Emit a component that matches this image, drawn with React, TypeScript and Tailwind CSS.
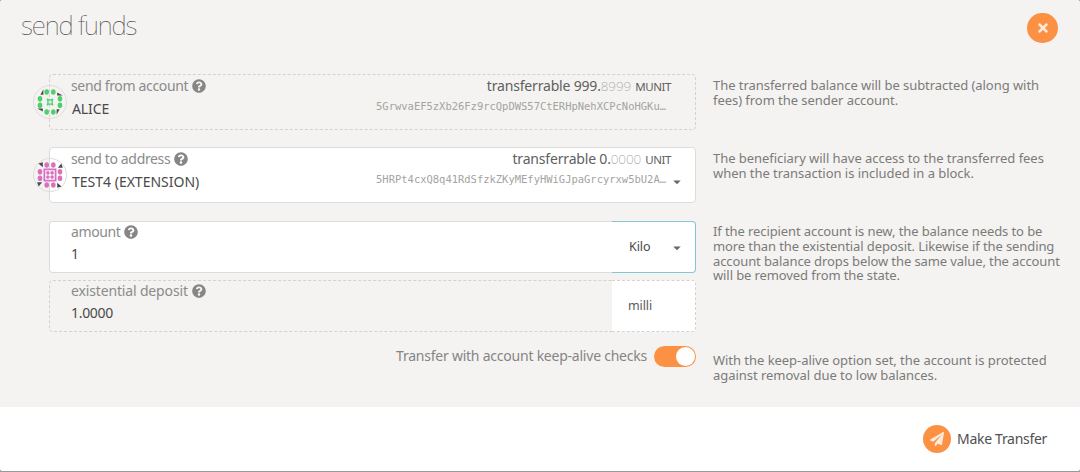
import type { ReactNode } from "react";
import { FaPaperPlane, FaQuestionCircle, FaTimes } from "react-icons/fa";

const DOTS: [number, number][] = [
  [13.7, 7], [20.3, 7], [7, 13.7], [7, 20.3], [27, 13.7], [27, 20.3], [13.7, 27], [20.3, 27],
];

function Identicon({ color, corner, children }: { color: string; corner: string; children: ReactNode }) {
  return (
    <svg className="absolute top-[10px] -left-[17px] size-[34px]" viewBox="0 0 34 34">
      <circle cx="17" cy="17" r="16.5" fill="none" stroke="#dcdcdc" />
      {[0, 90, 180, 270].map((angle) => (
        <polygon key={angle} points={corner} fill="#4a4a4a" transform={`rotate(${angle} 17 17)`} />
      ))}
      {DOTS.map(([x, y]) => (
        <ellipse key={`${x}-${y}`} cx={x} cy={y} rx="2.3" ry="2.8" fill={color} />
      ))}
      {children}
    </svg>
  );
}

function Label({ children }: { children: ReactNode }) {
  return (
    <div className="flex h-5 items-center gap-[4px] text-[14px] leading-5 text-[#8b8b8b]">
      <span>{children}</span>
      <FaQuestionCircle className="size-[14px] text-[#868686]" />
    </div>
  );
}

function Caret() {
  return (
    <svg className="h-[5px] w-[8px]" viewBox="0 0 8 5">
      <path d="M0.3 0.5h7.4L4 4.3z" fill="#666" />
    </svg>
  );
}

function Help({ lines, className }: { lines: string[]; className: string }) {
  return (
    <div className={`text-[13px] leading-[14.8px] whitespace-nowrap text-[#7b7b79] ${className}`}>
      {lines.map((line) => (
        <p key={line}>{line}</p>
      ))}
    </div>
  );
}

function Balance({ whole, fraction, unit }: { whole: string; fraction: string; unit: string }) {
  return (
    <div className="flex h-5 items-baseline leading-5 text-[#606060]">
      <span className="text-[14px] tracking-[-0.18px]">transferrable {whole}.</span>
      <span className="text-[13.5px] font-extralight tracking-[-0.1px] text-[#a3a3a3]">{fraction}</span>
      <span className="ml-[4px] text-[11.5px] tracking-[-0.4px]">{unit}</span>
    </div>
  );
}

function Address({ children }: { children: string }) {
  return (
    <div className="mr-[5px] font-['DejaVu_Sans_Mono',monospace] text-[10.47px] leading-5 text-[#a3a3a2]">{children}</div>
  );
}

export default function App() {
  return (
    <div className="flex h-[472px] w-[1080px] flex-col overflow-hidden bg-[#999] font-['Noto_Sans',sans-serif]">
      <div className="flex h-[471px] flex-col overflow-hidden rounded-[3px] bg-white">
        <main className="h-[407px] bg-[#f4f3f1]">
          <header className="flex h-[74px] items-start justify-between pr-[22px] pl-[21px]">
            <h1 className="pt-[7px] text-[26px] leading-[36px] font-thin tracking-[-1.15px] text-[#4a4a4a]">send funds</h1>
            <button className="mt-[13px] flex h-[30px] w-[31px] items-center justify-center rounded-full bg-[#fc9144] text-[#fdeadd]">
              <FaTimes className="size-[14px]" />
            </button>
          </header>

          <section className="flex h-[73px] pl-[49px]">
            <div className="relative flex h-[56px] w-[647px] justify-between rounded-[4px] border border-dashed border-[#d2d2d0] pr-[24px] pl-[21px]">
              <Identicon color="#4bd06c" corner="7.4,9.8 10.4,4.2 10.4,9.8">
                <rect x="14.9" y="14.9" width="4.2" height="4.2" fill="none" stroke="#4bd06c" strokeWidth="1.3" />
                {[[14.6, 14.6], [19.4, 14.6], [14.6, 19.4], [19.4, 19.4]].map(([x, y]) => (
                  <circle key={`${x}-${y}`} cx={x} cy={y} r="1" fill="#4bd06c" />
                ))}
              </Identicon>
              <div className="pt-px tracking-[-0.35px]">
                <Label>send from account</Label>
                <div className="mt-[3px] pl-[1px] text-[14px] leading-5 tracking-[-0.1px] text-[#4a4a4a]">ALICE</div>
              </div>
              <div className="flex flex-col items-end pt-[1px]">
                <Balance whole="999" fraction="8999" unit="MUNIT" />
                <Address>5GrwvaEF5zXb26Fz9rcQpDWS57CtERHpNehXCPcNoHGKu…</Address>
              </div>
            </div>
            <Help
              className="ml-[17px] pt-[4px] tracking-[-0.05px]"
              lines={["The transferred balance will be subtracted (along with", "fees) from the sender account."]}
            />
          </section>

          <section className="flex h-[74px] pl-[49px]">
            <div className="relative flex h-[56px] w-[647px] justify-between rounded-[4px] border border-[#dcdcdc] bg-white pr-[24px] pl-[21px]">
              <Identicon color="#d971bf" corner="5.4,5.6 9.8,4.2 9.8,9.2">
                <rect x="11.4" y="11.4" width="11.2" height="11.2" fill="#fff" stroke="#d971bf" strokeWidth="1.8" />
                {[14.9, 19.1].flatMap((x) =>
                  [14.9, 19.1].map((y) => <circle key={`${x}-${y}`} cx={x} cy={y} r="1.8" fill="#d971bf" />),
                )}
              </Identicon>
              <div className="pt-px tracking-[-0.35px]">
                <Label>send to address</Label>
                <div className="mt-[3px] pl-[1px] text-[14px] leading-5 tracking-[0px] text-[#4a4a4a]">TEST4 (EXTENSION)</div>
              </div>
              <div className="flex flex-col items-end pt-[1px]">
                <Balance whole="0" fraction="0000" unit="UNIT" />
                <Address>5HRPt4cxQ8q41RdSfzkZKyMEfyHWiGJpaGrcyrxw5bU2A…</Address>
              </div>
              <div className="absolute top-[32px] right-[14px] flex">
                <Caret />
              </div>
            </div>
            <Help
              className="ml-[17px] pt-[4px] tracking-[-0.04px]"
              lines={["The beneficiary will have access to the transferred fees", "when the transaction is included in a block."]}
            />
          </section>

          <section className="flex h-[125px] pl-[49px]">
            <div className="flex w-[647px] flex-col gap-[7px]">
              <div className="flex h-[52px]">
                <div className="flex-1 rounded-l-[4px] border border-r-0 border-[#dcdcdc] bg-white pl-[21px] tracking-[-0.4px]">
                  <Label>amount</Label>
                  <div className="mt-[2px] text-[14px] leading-5 text-[#4a4a4a]">1</div>
                </div>
                <div className="flex w-[84px] items-center justify-between rounded-r-[4px] border border-l-0 border-[#85c5d6] bg-white pr-[14px] pl-[17px]">
                  <span className="text-[12.5px] leading-5 tracking-[-0.1px] text-[#4a4a4a]">Kilo</span>
                  <span className="flex pt-[2px]"><Caret /></span>
                </div>
              </div>
              <div className="flex h-[52px]">
                <div className="flex-1 rounded-l-[4px] border border-r-0 border-dashed border-[#d2d2d0] pl-[21px] tracking-[-0.15px]">
                  <Label>existential deposit</Label>
                  <div className="mt-[2px] text-[14px] leading-5 tracking-[-0.3px] text-[#4a4a4a]">1.0000</div>
                </div>
                <div className="flex w-[84px] items-center rounded-r-[4px] border border-l-0 border-dashed border-[#d2d2d0] bg-white pl-[16px]">
                  <span className="text-[12.5px] leading-5 tracking-[-0.1px] text-[#5a5a5a]">milli</span>
                </div>
              </div>
            </div>
            <Help
              className="ml-[17px] pt-[3px] tracking-[-0.1px]"
              lines={[
                "If the recipient account is new, the balance needs to be",
                "more than the existential deposit. Likewise if the sending",
                "account balance drops below the same value, the account",
                "will be removed from the state.",
              ]}
            />
          </section>

          <section className="flex pl-[49px]">
            <div className="flex h-[21px] w-[647px] items-center justify-end gap-[7px]">
              <span className="pb-[2px] text-[14px] leading-5 tracking-[-0.23px] text-[#858585]">Transfer with account keep-alive checks</span>
              <div className="flex h-[21px] w-[42px] items-center justify-end rounded-full bg-[#fc9144] pr-px">
                <div className="size-[19px] rounded-full bg-white" />
              </div>
            </div>
            <Help
              className="ml-[17px] pt-[7px] tracking-[-0.04px]"
              lines={["With the keep-alive option set, the account is protected", "against removal due to low balances."]}
            />
          </section>
        </main>

        <footer className="flex h-[64px] items-center justify-end bg-white pr-[33px]">
          <button className="flex items-center gap-[6px]">
            <span className="flex size-[28px] items-center justify-center rounded-full bg-[#fc9144] text-[#fdeadd]">
              <FaPaperPlane className="size-[14px]" />
            </span>
            <span className="text-[14px] leading-5 tracking-[-0.3px] text-[#505050]">Make Transfer</span>
          </button>
        </footer>
      </div>
    </div>
  );
}
